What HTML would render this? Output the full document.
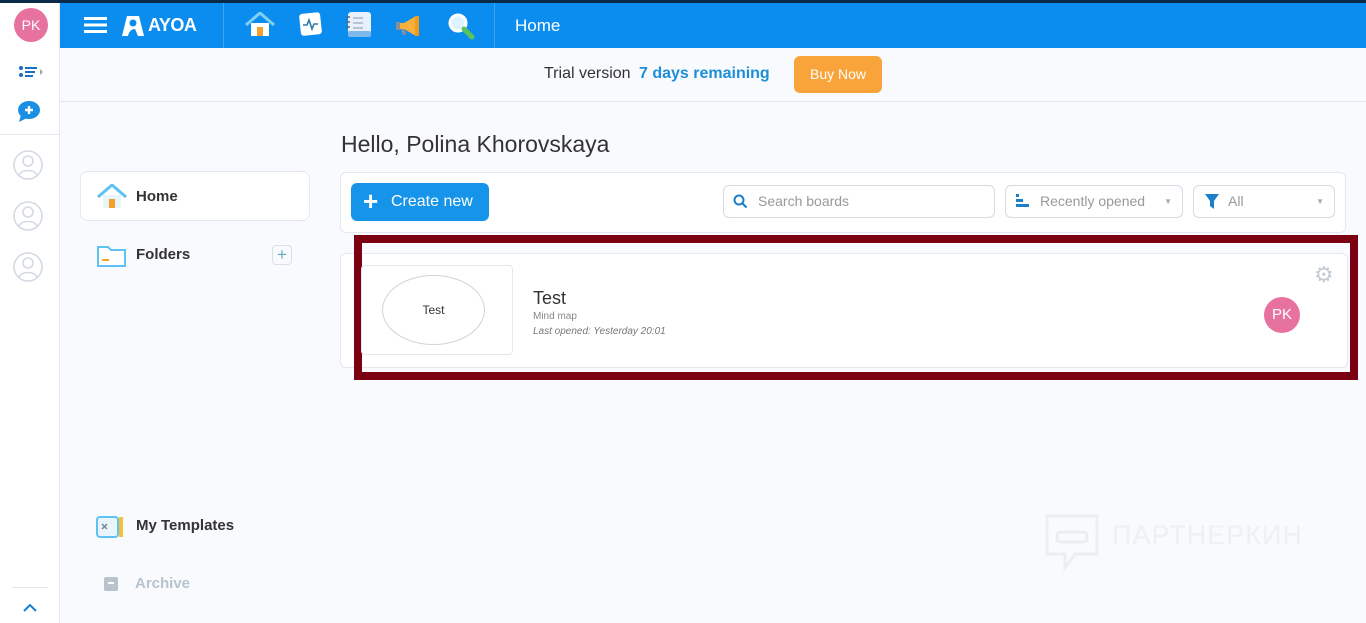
<!DOCTYPE html>
<html><head><meta charset="utf-8"><style>
*{box-sizing:border-box;margin:0;padding:0}
body{width:1366px;height:623px;overflow:hidden;background:#f8fafd;font-family:"Liberation Sans","DejaVu Sans",sans-serif;position:relative}
.abs{position:absolute}
</style></head><body>
<div class="abs" style="left:0;top:0;width:1366px;height:3px;background:#0b2a4a"></div>
<div class="abs" style="left:0;top:3px;width:60px;height:620px;background:#fff;border-right:1px solid #e3e8ee"></div>
<div class="abs" style="left:14px;top:8px;width:34px;height:34px;border-radius:50%;background:#e8729f;color:#fff;font-size:14px;text-align:center;line-height:34px">PK</div>
<svg class="abs" style="left:18px;top:64px" width="26" height="16"><circle cx="3" cy="4" r="2" fill="#1b6fc2"/><circle cx="3" cy="11" r="2" fill="#1b6fc2"/><rect x="7" y="3" width="12" height="2" fill="#1b6fc2"/><rect x="7" y="7" width="10" height="2" fill="#1b6fc2"/><rect x="7" y="11" width="8" height="2" fill="#1b6fc2"/><path d="M22 5l3 3-3 3z" fill="#9ab"/></svg>
<svg class="abs" style="left:16px;top:100px" width="26" height="24"><ellipse cx="13" cy="10" rx="11" ry="9" fill="#1a8fe3"/><path d="M5 15l-2 7 8-4z" fill="#1a8fe3"/><path d="M13 6v8M9 10h8" stroke="#fff" stroke-width="2.4"/></svg>
<div class="abs" style="left:0;top:134px;width:60px;height:1px;background:#e3e8ee"></div>
<svg class="abs" style="left:12px;top:149px" width="32" height="140"><g fill="none" stroke="#d3dae3" stroke-width="1.6"><circle cx="16" cy="16" r="14"/><circle cx="16" cy="12" r="5"/><path d="M7 26c3-6 15-6 18 0"/><circle cx="16" cy="67" r="14"/><circle cx="16" cy="63" r="5"/><path d="M7 77c3-6 15-6 18 0"/><circle cx="16" cy="118" r="14"/><circle cx="16" cy="114" r="5"/><path d="M7 128c3-6 15-6 18 0"/></g></svg>
<div class="abs" style="left:12px;top:587px;width:36px;height:1px;background:#e3e8ee"></div>
<svg class="abs" style="left:22px;top:602px" width="16" height="12"><path d="M2 9l6-6 6 6" stroke="#1a7fd1" stroke-width="2" fill="none"/></svg>
<div class="abs" style="left:60px;top:3px;width:1306px;height:45px;background:#0b8df0"></div>
<svg class="abs" style="left:84px;top:16px" width="24" height="18"><rect y="1" width="23" height="3" fill="#fff"/><rect y="7.5" width="23" height="3" fill="#fff"/><rect y="14" width="23" height="3" fill="#fff"/></svg>
<svg class="abs" style="left:118px;top:12px" width="28" height="26"><path d="M4 24L9 4h12l5 20h-6l-3-7c-3 0-6 2-7 7z" fill="#fff"/><circle cx="15" cy="11" r="3.5" fill="#0b8df0"/></svg>
<div class="abs" style="left:148px;top:15px;color:#fff;font-weight:bold;font-size:18px;letter-spacing:-0.5px">AYOA</div>
<div class="abs" style="left:223px;top:3px;width:1px;height:45px;background:#3ba6f4"></div>
<div class="abs" style="left:494px;top:3px;width:1px;height:45px;background:#3ba6f4"></div>
<svg class="abs" style="left:245px;top:12px" width="30" height="26"><rect x="6" y="11" width="18" height="13" fill="#fff"/><rect x="12" y="15" width="6" height="9" fill="#f4a12c"/><path d="M1 13L15 1l14 12" stroke="#7fd0f6" stroke-width="3" fill="none"/></svg>
<svg class="abs" style="left:299px;top:11px" width="24" height="26"><rect x="1" y="2" width="21" height="22" rx="3" fill="#fff" transform="rotate(-6 12 13)"/><path d="M4 14h4l2-5 3 9 2-5h4" stroke="#2b7ba8" stroke-width="1.6" fill="none"/></svg>
<svg class="abs" style="left:345px;top:11px" width="28" height="28"><rect x="3" y="1" width="23" height="25" rx="3" fill="#e8f1fb"/><rect x="3" y="20" width="23" height="6" rx="2" fill="#7cb9ea"/><g stroke="#9fb5c9" stroke-width="1.5"><path d="M8 7h10M8 12h10M8 17h10"/></g><path d="M1 6h4M1 11h4M1 16h4" stroke="#567" stroke-width="1.5"/></svg>
<svg class="abs" style="left:394px;top:14px" width="28" height="24"><path d="M4 9h6l12-7v20l-12-7H4z" fill="#f7b03b"/><rect x="21" y="2" width="4" height="20" rx="1" fill="#f39a1b"/><rect x="2" y="8" width="4" height="8" fill="#8a8f96"/><path d="M7 15l2 6h3l-1-6" fill="#8a8f96"/></svg>
<svg class="abs" style="left:446px;top:11px" width="30" height="30"><circle cx="12" cy="12" r="8" fill="#dff3ff" stroke="#ffffff" stroke-width="3"/><path d="M18 18l8 8" stroke="#5cc35c" stroke-width="5" stroke-linecap="round"/></svg>
<div class="abs" style="left:515px;top:16px;color:#fff;font-size:17px">Home</div>
<div class="abs" style="left:60px;top:101px;width:1306px;height:1px;background:#e3e8ee"></div>
<div class="abs" style="left:544px;top:65px;font-size:16px;color:#333">Trial version <span style="color:#1d8ed8;font-weight:bold;margin-left:4px">7 days remaining</span></div>
<div class="abs" style="left:794px;top:56px;width:88px;height:37px;border-radius:6px;background:#f9a43a;color:#fff;font-size:14px;text-align:center;line-height:37px">Buy Now</div>
<div class="abs" style="left:80px;top:171px;width:230px;height:50px;border:1px solid #e3e8ee;border-radius:8px;background:#fff"></div>
<svg class="abs" style="left:97px;top:184px" width="30" height="26"><path d="M1 13L15 1l14 12" stroke="#5ec3f2" stroke-width="3" fill="none"/><rect x="6" y="11" width="18" height="13" fill="#e9f4fb"/><rect x="12" y="15" width="6" height="9" fill="#f4a12c"/></svg>
<div class="abs" style="left:136px;top:188px;font-size:15px;font-weight:bold;color:#333">Home</div>
<svg class="abs" style="left:97px;top:243px" width="30" height="24"><path d="M1 4h10l3 3h14v16H1z" fill="#fff" stroke="#5ec3f2" stroke-width="2"/><rect x="5" y="16" width="7" height="2" fill="#f4a12c"/></svg>
<div class="abs" style="left:136px;top:246px;font-size:15px;font-weight:bold;color:#333">Folders</div>
<div class="abs" style="left:272px;top:245px;width:20px;height:20px;border:1px solid #d8e0e8;border-radius:4px;color:#6ab;text-align:center;line-height:17px;font-size:17px">+</div>
<svg class="abs" style="left:96px;top:515px" width="30" height="24"><rect x="1" y="2" width="21" height="20" rx="3" fill="#e9f4fb" stroke="#5ec3f2" stroke-width="2"/><rect x="23" y="2" width="4" height="20" fill="#f4c03a"/><path d="M6 9l5 5M11 9l-5 5" stroke="#789" stroke-width="1.5"/></svg>
<div class="abs" style="left:136px;top:517px;font-size:15px;font-weight:bold;color:#333">My Templates</div>
<svg class="abs" style="left:103px;top:576px" width="16" height="16"><rect x="1" y="1" width="14" height="14" rx="2" fill="#b7c3cd"/><rect x="5" y="6" width="6" height="2" fill="#fff"/></svg>
<div class="abs" style="left:135px;top:575px;font-size:15px;font-weight:bold;color:#b7c3cd">Archive</div>
<div class="abs" style="left:341px;top:131px;font-size:23px;color:#333">Hello, Polina Khorovskaya</div>
<div class="abs" style="left:340px;top:172px;width:1006px;height:61px;border:1px solid #e3e8ee;border-radius:6px;background:#fff"></div>
<div class="abs" style="left:351px;top:183px;width:138px;height:38px;border-radius:6px;background:#1594ea;color:#fff;font-size:16px;line-height:38px"><span style="font-size:26px;font-weight:bold;position:absolute;left:12px;top:-1px">+</span><span style="position:absolute;left:40px">Create new</span></div>
<div class="abs" style="left:723px;top:185px;width:272px;height:33px;border:1px solid #d3dbe3;border-radius:6px;background:#fff;color:#999;font-size:14px;line-height:31px;padding-left:34px">Search boards</div>
<svg class="abs" style="left:733px;top:194px" width="16" height="16"><circle cx="6" cy="6" r="4.5" stroke="#1d7fc8" stroke-width="2" fill="none"/><path d="M9.5 9.5l4 4" stroke="#1d7fc8" stroke-width="2.2"/></svg>
<div class="abs" style="left:1005px;top:185px;width:178px;height:33px;border:1px solid #d3dbe3;border-radius:6px;background:#fff;color:#999;font-size:14px;line-height:31px;padding-left:34px">Recently opened<span style="position:absolute;right:10px;font-size:8px;color:#aaa">▼</span></div>
<svg class="abs" style="left:1016px;top:194px" width="14" height="14"><rect x="0" y="0" width="3" height="3" fill="#1d7fc8"/><rect x="0" y="5" width="7" height="3" fill="#1d7fc8"/><rect x="0" y="10" width="13" height="3" fill="#1d7fc8"/></svg>
<div class="abs" style="left:1193px;top:185px;width:142px;height:33px;border:1px solid #d3dbe3;border-radius:6px;background:#fff;color:#999;font-size:14px;line-height:31px;padding-left:34px">All<span style="position:absolute;right:10px;font-size:8px;color:#aaa">▼</span></div>
<svg class="abs" style="left:1205px;top:194px" width="14" height="15"><path d="M0 0h14l-5 7v8l-4-3V7z" fill="#1d7fc8"/></svg>
<div class="abs" style="left:340px;top:253px;width:1008px;height:115px;border:1px solid #e3e8ee;border-radius:6px;background:#fff"></div>
<div class="abs" style="left:354px;top:235px;width:1004px;height:145px;border:8px solid #7a0012"></div>
<div class="abs" style="left:361px;top:265px;width:152px;height:90px;border:1px solid #e3e8ee;border-radius:4px;background:#fff"></div>
<div class="abs" style="left:382px;top:275px;width:103px;height:70px;border:1px solid #cfd4d9;border-radius:50%;font-size:12px;color:#333;text-align:center;line-height:68px">Test</div>
<div class="abs" style="left:533px;top:288px;font-size:18px;color:#333">Test</div>
<div class="abs" style="left:533px;top:311px;font-size:10px;color:#888">Mind map</div>
<div class="abs" style="left:533px;top:326px;font-size:10px;color:#777;font-style:italic">Last opened: Yesterday 20:01</div>
<div class="abs" style="left:1264px;top:297px;width:36px;height:36px;border-radius:50%;background:#e8729f;color:#fff;font-size:15px;text-align:center;line-height:36px">PK</div>
<div class="abs" style="left:1314px;top:262px;font-size:22px;color:#c3ccd5">⚙</div>
<svg class="abs" style="left:1045px;top:514px" width="54" height="58"><path d="M2 2h50v38H30l-10 14V40H2z" fill="none" stroke="#eceef0" stroke-width="3"/><rect x="12" y="18" width="30" height="10" rx="4" fill="none" stroke="#eceef0" stroke-width="3"/></svg>
<div class="abs" style="left:1112px;top:520px;font-size:27px;color:#eef0f2;letter-spacing:1px">ПАРТНЕРКИН</div>
</body></html>
